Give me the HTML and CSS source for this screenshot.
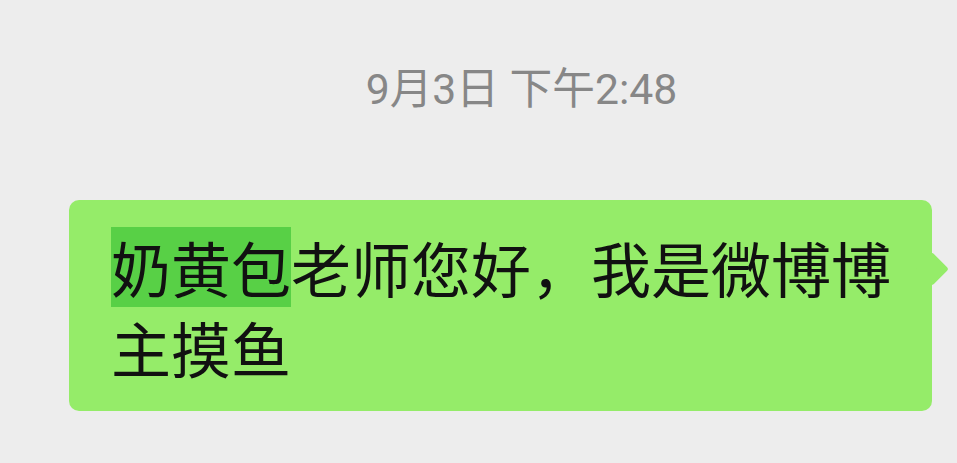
FILE: index.html
```html
<!DOCTYPE html>
<html lang="zh-CN">
<head>
<meta charset="utf-8">
<link rel="stylesheet" href="styles.css">
</head>
<body>
<div class="chat">
  <div class="time">9月3日 下午2:48</div>
  <div class="row">
    <div class="bubble"><span class="sel">奶黄包</span>老师您好，我是微博博主摸鱼</div>
  </div>
</div>
</body>
</html>
```
FILE: styles.css
```css
html, body {
  margin: 0;
  padding: 0;
  background: #ededed;
  width: 957px;
  height: 463px;
  overflow: hidden;
}
.chat {
  display: flex;
  flex-direction: column;
  padding-top: 59px;
}
.time {
  height: 60px;
  line-height: 60px;
  padding-left: 86px;
  text-align: center;
  font-family: "Roboto", "Noto Sans CJK SC", sans-serif;
  font-size: 42.7px;
  color: #878787;
}
.row {
  margin-top: 81px;
  padding-left: 69px;
  display: flex;
}
.bubble {
  position: relative;
  width: 863px;
  box-sizing: border-box;
  padding: 27px 41px 24px 42px;
  background: #95ec69;
  border-radius: 10px;
  font-family: "Noto Sans CJK SC", sans-serif;
  font-size: 60px;
  line-height: 80px;
  color: #111111;
}
.bubble::after {
  content: "";
  position: absolute;
  right: -12px;
  top: 57px;
  width: 24px;
  height: 24px;
  background: #95ec69;
  transform: rotate(45deg);
  border-radius: 3px;
}
.sel {
  display: inline-block;
  height: 80px;
  background: #58d046;
}
```
